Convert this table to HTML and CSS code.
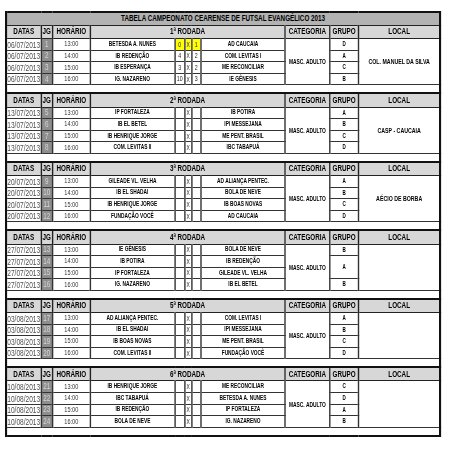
FILE: index.html
```html
<!DOCTYPE html>
<html lang="pt-BR">
<head>
<meta charset="utf-8">
<title>Tabela Campeonato Cearense de Futsal Evangélico 2013</title>
<link rel="stylesheet" href="styles.css">
</head>
<body>
<div class="frame">
<table class="sheet">
<colgroup>
<col class="c-date"><col class="c-jg"><col class="c-time"><col class="c-team"><col class="c-s1"><col class="c-x"><col class="c-s2"><col class="c-team2"><col class="c-cat"><col class="c-grp"><col class="c-loc">
</colgroup>
<tbody>
<tr class="title"><td colspan="11">TABELA CAMPEONATO CEARENSE DE FUTSAL EVANGÉLICO 2013</td></tr>

<tr class="head first"><th>DATAS</th><th>JG</th><th>HORÁRIO</th><th colspan="5">1ª RODADA</th><th>CATEGORIA</th><th>GRUPO</th><th>LOCAL</th></tr>
<tr class="game"><td class="date">06/07/2013</td><td class="jg">1</td><td class="time">13:00</td><td class="team">BETESDA A. NUNES</td><td class="sc hl">0</td><td class="x hl">X</td><td class="sc hl">1</td><td class="team">AD CAUCAIA</td><td class="cat" rowspan="4">MASC. ADULTO</td><td class="grp">D</td><td class="loc" rowspan="4">COL. MANUEL DA SILVA</td></tr>
<tr class="game"><td class="date">06/07/2013</td><td class="jg">2</td><td class="time">14:00</td><td class="team">IB REDENÇÃO</td><td class="sc">4</td><td class="x">X</td><td class="sc">2</td><td class="team">COM. LEVITAS I</td><td class="grp">A</td></tr>
<tr class="game"><td class="date">06/07/2013</td><td class="jg">3</td><td class="time">15:00</td><td class="team">IB ESPERANÇA</td><td class="sc">3</td><td class="x">X</td><td class="sc">2</td><td class="team">ME RECONCILIAR</td><td class="grp">C</td></tr>
<tr class="game"><td class="date">06/07/2013</td><td class="jg">4</td><td class="time">16:00</td><td class="team">IG. NAZARENO</td><td class="sc">10</td><td class="x">X</td><td class="sc">3</td><td class="team">IE GÊNESIS</td><td class="grp">B</td></tr>
<tr class="gap"><td colspan="11"></td></tr>

<tr class="head"><th>DATAS</th><th>JG</th><th>HORÁRIO</th><th colspan="5">2ª RODADA</th><th>CATEGORIA</th><th>GRUPO</th><th>LOCAL</th></tr>
<tr class="game"><td class="date">13/07/2013</td><td class="jg">5</td><td class="time">13:00</td><td class="team">IP FORTALEZA</td><td class="sc"></td><td class="x">X</td><td class="sc"></td><td class="team">IB POTIRA</td><td class="cat" rowspan="4">MASC. ADULTO</td><td class="grp">A</td><td class="loc" rowspan="4">CASP - CAUCAIA</td></tr>
<tr class="game"><td class="date">13/07/2013</td><td class="jg">6</td><td class="time">14:00</td><td class="team">IB EL BETEL</td><td class="sc"></td><td class="x">X</td><td class="sc"></td><td class="team">IPI MESSEJANA</td><td class="grp">B</td></tr>
<tr class="game"><td class="date">13/07/2013</td><td class="jg">7</td><td class="time">15:00</td><td class="team">IB HENRIQUE JORGE</td><td class="sc"></td><td class="x">X</td><td class="sc"></td><td class="team">ME PENT. BRASIL</td><td class="grp">C</td></tr>
<tr class="game"><td class="date">13/07/2013</td><td class="jg">8</td><td class="time">16:00</td><td class="team">COM. LEVITAS II</td><td class="sc"></td><td class="x">X</td><td class="sc"></td><td class="team">IBC TABAPUÁ</td><td class="grp">D</td></tr>
<tr class="gap"><td colspan="11"></td></tr>

<tr class="head"><th>DATAS</th><th>JG</th><th>HORÁRIO</th><th colspan="5">3ª RODADA</th><th>CATEGORIA</th><th>GRUPO</th><th>LOCAL</th></tr>
<tr class="game"><td class="date">20/07/2013</td><td class="jg">9</td><td class="time">13:00</td><td class="team">GILEADE VL. VELHA</td><td class="sc"></td><td class="x">X</td><td class="sc"></td><td class="team">AD ALIANÇA PENTEC.</td><td class="cat" rowspan="4">MASC. ADULTO</td><td class="grp">A</td><td class="loc" rowspan="4">AÉCIO DE BORBA</td></tr>
<tr class="game"><td class="date">20/07/2013</td><td class="jg">10</td><td class="time">14:00</td><td class="team">IB EL SHADAI</td><td class="sc"></td><td class="x">X</td><td class="sc"></td><td class="team">BOLA DE NEVE</td><td class="grp">B</td></tr>
<tr class="game"><td class="date">20/07/2013</td><td class="jg">11</td><td class="time">15:00</td><td class="team">IB HENRIQUE JORGE</td><td class="sc"></td><td class="x">X</td><td class="sc"></td><td class="team">IB BOAS NOVAS</td><td class="grp">C</td></tr>
<tr class="game"><td class="date">20/07/2013</td><td class="jg">12</td><td class="time">16:00</td><td class="team">FUNDAÇÃO VOCÊ</td><td class="sc"></td><td class="x">X</td><td class="sc"></td><td class="team">AD CAUCAIA</td><td class="grp">D</td></tr>
<tr class="gap"><td colspan="11"></td></tr>

<tr class="head"><th>DATAS</th><th>JG</th><th>HORÁRIO</th><th colspan="5">4ª RODADA</th><th>CATEGORIA</th><th>GRUPO</th><th>LOCAL</th></tr>
<tr class="game"><td class="date">27/07/2013</td><td class="jg">13</td><td class="time">13:00</td><td class="team">IE GÊNESIS</td><td class="sc"></td><td class="x">X</td><td class="sc"></td><td class="team">BOLA DE NEVE</td><td class="cat" rowspan="4">MASC. ADULTO</td><td class="grp">B</td><td class="loc" rowspan="4"></td></tr>
<tr class="game"><td class="date">27/07/2013</td><td class="jg">14</td><td class="time">14:00</td><td class="team">IB POTIRA</td><td class="sc"></td><td class="x">X</td><td class="sc"></td><td class="team">IB REDENÇÃO</td><td class="grp" rowspan="2">A</td></tr>
<tr class="game"><td class="date">27/07/2013</td><td class="jg">15</td><td class="time">15:00</td><td class="team">IP FORTALEZA</td><td class="sc"></td><td class="x">X</td><td class="sc"></td><td class="team">GILEADE VL. VELHA</td></tr>
<tr class="game"><td class="date">27/07/2013</td><td class="jg">16</td><td class="time">16:00</td><td class="team">IG. NAZARENO</td><td class="sc"></td><td class="x">X</td><td class="sc"></td><td class="team">IB EL BETEL</td><td class="grp">B</td></tr>
<tr class="gap"><td colspan="11"></td></tr>

<tr class="head"><th>DATAS</th><th>JG</th><th>HORÁRIO</th><th colspan="5">5ª RODADA</th><th>CATEGORIA</th><th>GRUPO</th><th>LOCAL</th></tr>
<tr class="game"><td class="date">03/08/2013</td><td class="jg">17</td><td class="time">13:00</td><td class="team">AD ALIANÇA PENTEC.</td><td class="sc"></td><td class="x">X</td><td class="sc"></td><td class="team">COM. LEVITAS I</td><td class="cat" rowspan="4">MASC. ADULTO</td><td class="grp">A</td><td class="loc" rowspan="4"></td></tr>
<tr class="game"><td class="date">03/08/2013</td><td class="jg">18</td><td class="time">14:00</td><td class="team">IB EL SHADAI</td><td class="sc"></td><td class="x">X</td><td class="sc"></td><td class="team">IPI MESSEJANA</td><td class="grp">B</td></tr>
<tr class="game"><td class="date">03/08/2013</td><td class="jg">19</td><td class="time">15:00</td><td class="team">IB BOAS NOVAS</td><td class="sc"></td><td class="x">X</td><td class="sc"></td><td class="team">ME PENT. BRASIL</td><td class="grp">C</td></tr>
<tr class="game"><td class="date">03/08/2013</td><td class="jg">20</td><td class="time">16:00</td><td class="team">COM. LEVITAS II</td><td class="sc"></td><td class="x">X</td><td class="sc"></td><td class="team">FUNDAÇÃO VOCÊ</td><td class="grp">D</td></tr>
<tr class="gap"><td colspan="11"></td></tr>

<tr class="head"><th>DATAS</th><th>JG</th><th>HORÁRIO</th><th colspan="5">6ª RODADA</th><th>CATEGORIA</th><th>GRUPO</th><th>LOCAL</th></tr>
<tr class="game"><td class="date">10/08/2013</td><td class="jg">21</td><td class="time">13:00</td><td class="team">IB HENRIQUE JORGE</td><td class="sc"></td><td class="x">X</td><td class="sc"></td><td class="team">ME RECONCILIAR</td><td class="cat" rowspan="4">MASC. ADULTO</td><td class="grp">C</td><td class="loc" rowspan="4"></td></tr>
<tr class="game"><td class="date">10/08/2013</td><td class="jg">22</td><td class="time">14:00</td><td class="team">IBC TABAPUÁ</td><td class="sc"></td><td class="x">X</td><td class="sc"></td><td class="team">BETESDA A. NUNES</td><td class="grp">D</td></tr>
<tr class="game"><td class="date">10/08/2013</td><td class="jg">23</td><td class="time">15:00</td><td class="team">IB REDENÇÃO</td><td class="sc"></td><td class="x">X</td><td class="sc"></td><td class="team">IP FORTALEZA</td><td class="grp">A</td></tr>
<tr class="game"><td class="date">10/08/2013</td><td class="jg">24</td><td class="time">16:00</td><td class="team">BOLA DE NEVE</td><td class="sc"></td><td class="x">X</td><td class="sc"></td><td class="team">IG. NAZARENO</td><td class="grp">B</td></tr>
<tr class="gap last"><td colspan="11"></td></tr>
</tbody>
</table>
</div>
</body>
</html>
```

FILE: styles.css
```css
* { box-sizing: border-box; }

html, body {
  margin: 0;
  padding: 0;
  background: #ffffff;
}

body {
  padding: 11px 0 0 5px;
  font-family: "Liberation Sans", Arial, sans-serif;
  color: #000;
}

.frame {
  width: 442px;
  overflow: hidden;
}

/* the sheet is laid out wide and squeezed horizontally, like the condensed spreadsheet print */
.sheet {
  width: 620px;
  table-layout: fixed;
  border-collapse: collapse;
  border-top: 2px solid #111;
  border-bottom: 2px solid #111;
  border-left: 3px solid #111;
  border-right: 3px solid #111;
  transform: scaleX(0.7);
  transform-origin: 0 0;
}

.c-date { width: 50px; }
.c-jg { width: 16.5px; }
.c-time { width: 53.5px; }
.c-team { width: 121px; }
.c-s1 { width: 14px; }
.c-x { width: 10px; }
.c-s2 { width: 13.5px; }
.c-team2 { width: 120px; }
.c-cat { width: 64px; }
.c-grp { width: 41px; }
.c-loc { width: 116.5px; }

.sheet td,
.sheet th {
  padding: 0;
  line-height: 1;
  white-space: nowrap;
  overflow: hidden;
  text-align: center;
  vertical-align: middle;
}

.title td {
  height: 13px;
  background: #b2b2b2;
  font-size: 9px;
  font-weight: bold;
  border-bottom: 1px solid #222;
}

.head th {
  height: 13.6px;
  background: #d7d7d7;
  font-size: 9px;
  font-weight: bold;
  border-left: 2px solid #222;
  border-right: 2px solid #222;
  border-bottom: 1px solid #222;
  border-top: 2px solid #111;
}

.head.first th {
  border-top: 1px solid #222;
}

.game td {
  height: 11.6px;
  border-left: 2px solid #333;
  border-right: 2px solid #333;
  border-top: 1px solid #333;
  border-bottom: 1px solid #333;
}

.date {
  font-size: 9.4px;
  color: #4d4d4d;
}

.jg {
  background: #8e8e8e;
  color: #d6d6d6;
  font-size: 9px;
}

.time {
  font-size: 8px;
  color: #333;
}

.team {
  font-size: 6.9px;
  font-weight: bold;
}

.sc {
  font-size: 7.5px;
  color: #222;
}

.x {
  font-size: 7px;
  color: #222;
}

.hl {
  background: #ffff00;
}

.cat {
  font-size: 7px;
  font-weight: bold;
}

.grp {
  font-size: 6.5px;
  font-weight: bold;
}

.loc {
  font-size: 7.5px;
  font-weight: bold;
}

.gap td {
  height: 8.5px;
  border-top: 1px solid #333;
  border-bottom: 2px solid #111;
}

.gap.last td {
  height: 8.5px;
}
```
